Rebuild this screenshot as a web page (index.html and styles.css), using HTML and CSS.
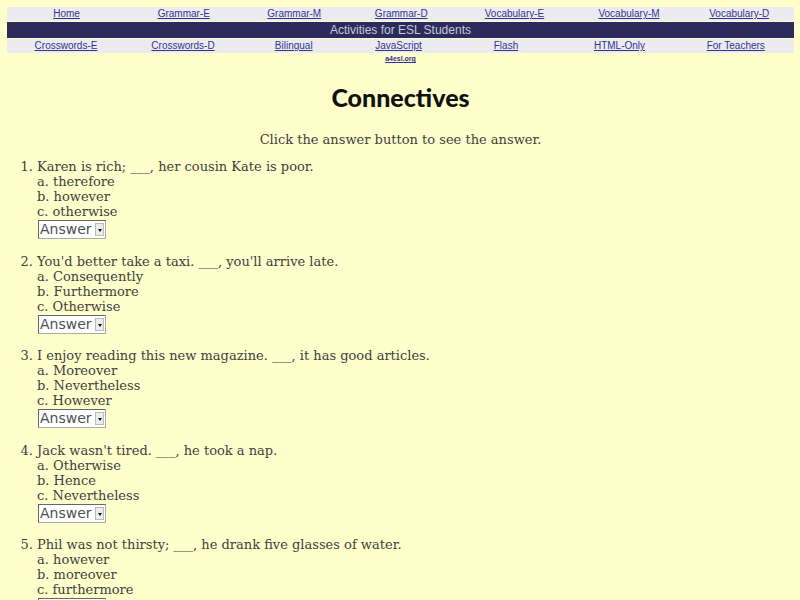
FILE: index.html
```html
<!DOCTYPE html>
<html>
<head>
<meta charset="utf-8">
<title>Connectives</title>
<link rel="stylesheet" href="styles.css">
</head>
<body>
<div class="nav">
  <div class="row light top">
    <a href="#">Home</a><a href="#">Grammar-E</a><a href="#">Grammar-M</a><a href="#">Grammar-D</a><a href="#">Vocabulary-E</a><a href="#">Vocabulary-M</a><a href="#">Vocabulary-D</a>
  </div>
  <div class="row dark">Activities for ESL Students</div>
  <div class="row light bottom">
    <a href="#">Crosswords-E</a><a href="#">Crosswords-D</a><a href="#">Bilingual</a><a href="#">JavaScript</a><a href="#">Flash</a><a href="#">HTML-Only</a><a href="#">For Teachers</a>
  </div>
  <div class="site"><a href="#">a4esl.org</a></div>
</div>

<h1>Connectives</h1>
<p class="intro">Click the answer button to see the answer.</p>

<ol class="quiz">
  <li>Karen is rich; ___, her cousin Kate is poor.<br>a. therefore<br>b. however<br>c. otherwise
    <div class="ans"><span class="sel"><select><option>Answer</option></select><span class="arrow"></span></span></div></li>
  <li>You'd better take a taxi. ___, you'll arrive late.<br>a. Consequently<br>b. Furthermore<br>c. Otherwise
    <div class="ans"><span class="sel"><select><option>Answer</option></select><span class="arrow"></span></span></div></li>
  <li>I enjoy reading this new magazine. ___, it has good articles.<br>a. Moreover<br>b. Nevertheless<br>c. However
    <div class="ans"><span class="sel"><select><option>Answer</option></select><span class="arrow"></span></span></div></li>
  <li>Jack wasn't tired. ___, he took a nap.<br>a. Otherwise<br>b. Hence<br>c. Nevertheless
    <div class="ans"><span class="sel"><select><option>Answer</option></select><span class="arrow"></span></span></div></li>
  <li>Phil was not thirsty; ___, he drank five glasses of water.<br>a. however<br>b. moreover<br>c. furthermore
    <div class="ans"><span class="sel"><select><option>Answer</option></select><span class="arrow"></span></span></div></li>
</ol>
</body>
</html>
```

FILE: styles.css
```css
html, body {
  background: #ffffcc;
}
body {
  margin: 7px 6px 8px 7px;
  font-family: "DejaVu Serif", serif;
  font-size: 13px;
  color: #404040;
}
.nav {
  font-family: "Liberation Sans", Arial, sans-serif;
  font-size: 10px;
}
.row {
  display: grid;
  text-align: center;
}
.row.top {
  grid-template-columns: 119fr 115.5fr 105.5fr 108.5fr 118fr 111fr 109.5fr;
}
.row.bottom {
  grid-template-columns: 118fr 116fr 105.5fr 104fr 111fr 116fr 116.5fr;
}
.row.light {
  background: #ececf0;
  height: 14px;
  line-height: 14px;
  margin-bottom: 1px;
}
.row.dark {
  display: block;
  background: #2c2c5c;
  color: #c8c8d8;
  font-size: 12px;
  height: 16px;
  line-height: 16px;
  margin-bottom: 1px;
}
.row a {
  color: #33338f;
  text-decoration: underline;
}
.site {
  text-align: center;
  font-size: 7px;
  line-height: 10px;
  font-weight: bold;
}
.site a {
  color: #33338f;
}
h1 {
  font-family: "Comic Sans MS", "Lato", "DejaVu Sans", sans-serif;
  font-weight: 900;
  font-size: 25px;
  color: #111;
  text-align: center;
  margin: 18px 0 0;
  line-height: 30px;
}
.intro {
  text-align: center;
  margin: 20px 0 0;
  line-height: 15px;
}
.quiz {
  margin: 12px 0 0;
  padding-left: 30px;
  line-height: 15px;
}
.quiz li {
  margin-bottom: 14.5px;
  padding-left: 0;
}
.ans {
  margin-top: 1px;
  margin-left: 1px;
}
.sel {
  position: relative;
  display: inline-block;
}
.sel select {
  appearance: none;
  -webkit-appearance: none;
  font-family: "DejaVu Sans", sans-serif;
  font-size: 14px;
  color: #505050;
  background: #fff;
  border: 1px solid #aaa;
  border-top-color: #666;
  border-left-color: #666;
  border-radius: 0;
  width: 68px;
  height: 19px;
  padding: 0 0 0 1px;
  margin: 0;
  line-height: 17px;
}
.arrow {
  position: absolute;
  right: 2px;
  top: 3px;
  width: 9px;
  height: 13px;
  background: #ececec;
  border: 1px solid #bbb;
  box-sizing: border-box;
}
.arrow::after {
  content: "";
  position: absolute;
  left: 2px;
  top: 5px;
  border-left: 2px solid transparent;
  border-right: 2px solid transparent;
  border-top: 3px solid #111;
}
```
